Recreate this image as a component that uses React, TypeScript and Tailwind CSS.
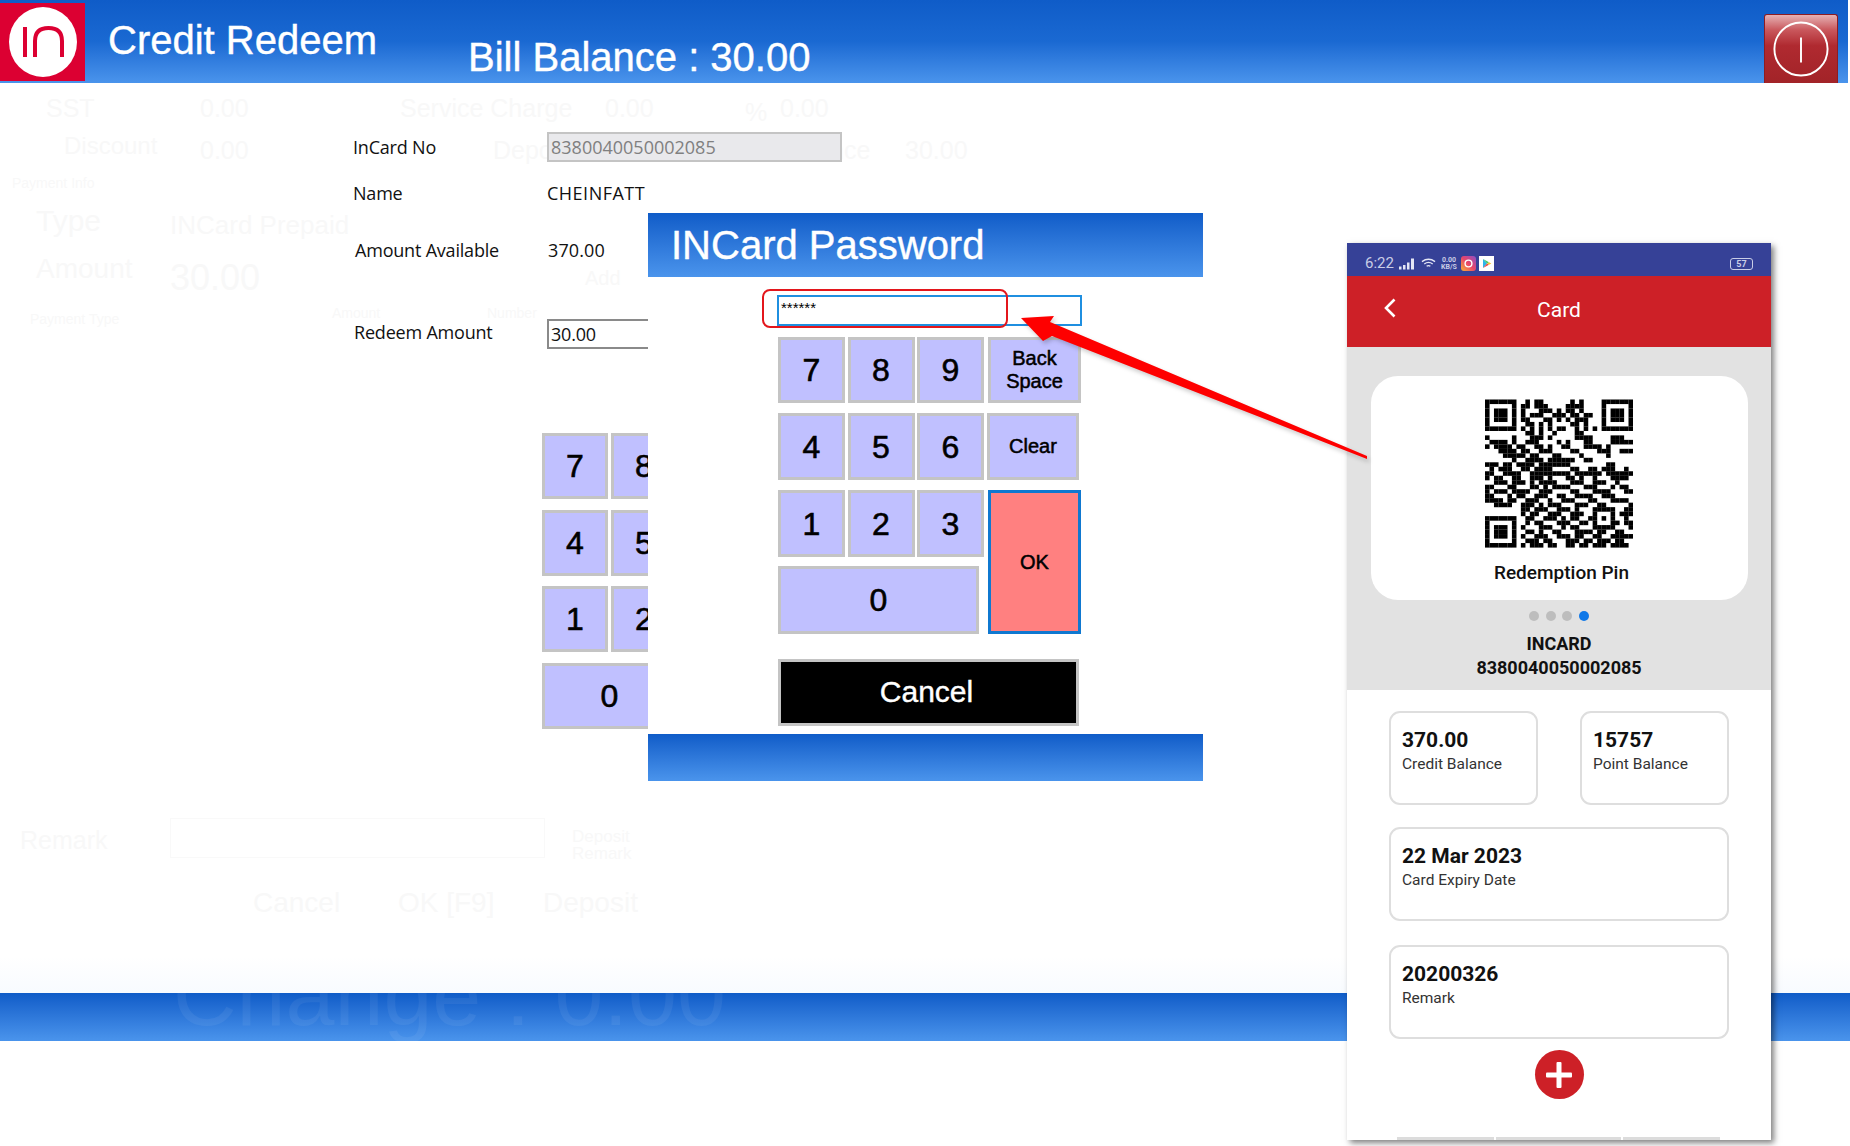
import React from "react";

const F0 = "1111111";
const F1 = "1000001";
const F2 = "1011101";
const qrRows = [
  F0 + "0010110000001010000" + F0,
  F1 + "0110111000011110000" + F1,
  F2 + "0100011101011010000" + F2,
  F2 + "0101110011101101100" + F2,
  F2 + "0110001101010111000" + F2,
  F1 + "0011010100001101000" + F1,
  F0 + "0101010101100101010" + F0,
  "0000000" + "0011010010000110000" + "0000000",
  "100000100011101000001111000011100",
  "011110100111000010100011000011111",
  "101111011001101001100011110100000",
  "000111101100111000011000011100111",
  "000011111011000110000100000100000",
  "000000100111101111110011000000000",
  "111011011110111111100000000110000",
  "010111001101111000011001101110010",
  "110011110011111111101111110111111",
  "101100110011101000110100100011110",
  "001110111010111100011100111001000",
  "110001100011010111100011100010110",
  "101110111100111000011000111100011",
  "110001011001110011001111001110000",
  "111101100111001001110001100011110",
  "001111001110101110001110011000001",
  "000000001101110011101000111110011",
  "000000001011001110011100100010111",
  "111111100110011101011001101010010",
  "100000100101100011100110100011011",
  "101110101000111001011000111110001",
  "101110100110100110001111011001100",
  "101110101001110011101100110011111",
  "100000100111011000111011011101100",
  "111111101011101100110110111011110",
];

function QR() {
  const cells: React.ReactElement[] = [];
  qrRows.forEach((row, y) =>
    row
      .padEnd(33, "0")
      .slice(0, 33)
      .split("")
      .forEach((c, x) => {
        if (c === "1") cells.push(<rect key={`${x}-${y}`} x={x} y={y} width={1.02} height={1.02} />);
      })
  );
  return (
    <svg viewBox="0 0 33 33" className="w-[148px] h-[149px] block" fill="#000">
      {cells}
    </svg>
  );
}

function Key({ children, className = "" }: { children: React.ReactNode; className?: string }) {
  return (
    <div
      className={`flex items-center justify-center bg-[#c0c0ff] border-[3px] border-[#c4c4c4] text-black text-center shrink-0 ${className}`}
    >
      {children}
    </div>
  );
}

const digit = "w-[67px] h-[67px] text-[32px] [-webkit-text-stroke:0.6px_black]";
const word = "text-[20px] leading-[23px] [-webkit-text-stroke:0.5px_black]";

function Dialog() {
  return (
    <div className="absolute left-[648px] top-[213px] w-[555px] h-[568px] bg-white flex flex-col">
      <div className="h-[64px] shrink-0 bg-linear-to-b from-[#0f5cc8] to-[#4a94ec] pl-[23px] flex items-center text-white text-[40px] leading-none [-webkit-text-stroke:0.4px_white]">
        INCard Password
      </div>
      <div className="ml-[129px] mt-[18px] w-[305px] h-[31px] border-2 border-[#1f8fe0] bg-white px-[2px] text-[15px] leading-[22px] text-black">
        ******
      </div>
      <div className="ml-[130px] mt-[11px] flex flex-col gap-[10px]">
        <div className="flex">
          <div className="flex gap-[2.5px]">
            <Key className={`${digit} !h-[66px]`}>7</Key>
            <Key className={`${digit} !h-[66px]`}>8</Key>
            <Key className={`${digit} !h-[66px]`}>9</Key>
          </div>
          <Key className={`ml-[4px] w-[93px] h-[66px] ${word}`}>
            Back
            <br />
            Space
          </Key>
        </div>
        <div className="flex">
          <div className="flex gap-[2.5px]">
            <Key className={digit}>4</Key>
            <Key className={digit}>5</Key>
            <Key className={digit}>6</Key>
          </div>
          <Key className={`ml-[3px] w-[92px] h-[67px] ${word}`}>Clear</Key>
        </div>
        <div className="flex">
          <div className="flex flex-col gap-[9px]">
            <div className="flex gap-[2.5px]">
              <Key className={digit}>1</Key>
              <Key className={digit}>2</Key>
              <Key className={digit}>3</Key>
            </div>
            <Key className="w-[201px] h-[68px] text-[32px] [-webkit-text-stroke:0.6px_black]">0</Key>
          </div>
          <Key className={`ml-[4px] w-[93px] h-[144px] !bg-[#ff8080] !border-[#0f78d0] ${word}`}>OK</Key>
        </div>
      </div>
      <div className="ml-[130px] mt-[25px] w-[301px] h-[67px] bg-black border-[3px] border-[#c4c4c4] pr-[4px] pb-[2px] flex items-center justify-center text-white text-[30px] [-webkit-text-stroke:0.4px_white]">
        Cancel
      </div>
      <div className="mt-auto h-[47px] bg-linear-to-b from-[#0f5cc8] to-[#4a94ec]" />
    </div>
  );
}

function InfoCard({ value, label, className = "" }: { value: string; label: string; className?: string }) {
  return (
    <div className={`h-[94px] rounded-[11px] border-2 border-[#dedede] pl-[11px] pt-[13px] ${className}`}>
      <div className="text-[21px] leading-[28px] font-bold text-[#111]">{value}</div>
      <div className="text-[15.5px] leading-[20px] text-[#333]">{label}</div>
    </div>
  );
}

function Phone() {
  return (
    <div className="absolute left-[1347px] top-[243px] w-[424px] h-[897px] bg-white flex flex-col shadow-[3px_3px_6px_rgba(0,0,0,0.5)] font-['Roboto',sans-serif] overflow-hidden">
      <div className="h-[33px] shrink-0 bg-[#364197] flex items-center pl-[18px] pr-[18px] pt-[8px] text-[#c9cde6]">
        <span className="text-[15px] leading-none">6:22</span>
        <svg viewBox="0 0 18 12" className="w-[18px] h-[13px] ml-[5px]" fill="#e4e6f5">
          <rect x="0" y="9" width="2.5" height="3" />
          <rect x="4" y="7.5" width="2.5" height="4.5" />
          <rect x="8" y="5" width="2.5" height="7" />
          <rect x="12" y="1" width="3" height="11" />
        </svg>
        <svg viewBox="0 0 16 12" className="w-[15px] h-[13px] ml-[4px]" fill="none" stroke="#e4e6f5" strokeWidth="1.4">
          <path d="M1 4 Q8 -1 15 4" />
          <path d="M3.5 6.5 Q8 3 12.5 6.5" />
          <path d="M6 9 Q8 7.5 10 9" />
        </svg>
        <span className="ml-[4px] w-[18px] text-[7px] leading-[7px] text-center font-bold">
          0.00
          <br />
          KB/S
        </span>
        <svg viewBox="0 0 15 15" className="w-[15px] h-[15px] ml-[3px]">
          <defs>
            <linearGradient id="ig" x1="0" y1="1" x2="1" y2="0">
              <stop offset="0" stopColor="#f9b233" />
              <stop offset="0.5" stopColor="#e8456b" />
              <stop offset="1" stopColor="#8a4fc8" />
            </linearGradient>
          </defs>
          <rect width="15" height="15" rx="3" fill="url(#ig)" />
          <circle cx="7.5" cy="7.5" r="3.4" fill="none" stroke="#fff" strokeWidth="1.4" />
        </svg>
        <svg viewBox="0 0 15 15" className="w-[15px] h-[15px] ml-[3px]">
          <rect width="15" height="15" fill="#fff" />
          <path d="M4 3 L8 7.5 L4 12 Z" fill="#2fb4e8" />
          <path d="M4 3 L10 6.3 L8 7.5 Z" fill="#3ec46d" />
          <path d="M4 12 L10 8.7 L8 7.5 Z" fill="#e84a4a" />
          <path d="M10 6.3 L12.3 7.5 L10 8.7 L8 7.5 Z" fill="#f6c22c" />
        </svg>
        <span className="ml-auto w-[23px] h-[12px] rounded-[3px] border border-[#c9cde6] text-[9px] leading-[10px] text-center font-bold">
          57
        </span>
      </div>
      <div className="relative h-[71px] shrink-0 bg-[#cd2027] flex items-center justify-center text-white text-[21px]">
        <svg viewBox="0 0 12 20" className="absolute left-[37px] top-[22px] w-[12px] h-[20px]" fill="none" stroke="#fff" strokeWidth="2.6">
          <path d="M10.5 1.5 L2 10 L10.5 18.5" />
        </svg>
        <span className="-mt-[2px]">Card</span>
      </div>
      <div className="h-[343px] shrink-0 bg-[#e2e2e2] pt-[29px] flex flex-col items-center">
        <div className="w-[377px] h-[224px] bg-white rounded-[27px] flex flex-col items-center pt-[23px]">
          <QR />
          <div className="mt-[13px] ml-[5px] text-[19px] leading-[24px] font-medium text-[#111]">Redemption Pin</div>
        </div>
        <div className="mt-[11px] flex gap-[6.5px]">
          <span className="w-[10px] h-[10px] rounded-full bg-[#bdbdbd]" />
          <span className="w-[10px] h-[10px] rounded-full bg-[#bdbdbd]" />
          <span className="w-[10px] h-[10px] rounded-full bg-[#bdbdbd]" />
          <span className="w-[10px] h-[10px] rounded-full bg-[#0f78e8]" />
        </div>
        <div className="mt-[11px] text-[18px] leading-[23.5px] font-bold text-[#111] text-center">
          INCARD
          <br />
          8380040050002085
        </div>
      </div>
      <div className="flex flex-col px-[42px] pt-[21px]">
        <div className="flex justify-between">
          <InfoCard className="w-[149px]" value="370.00" label="Credit Balance" />
          <InfoCard className="w-[149px]" value="15757" label="Point Balance" />
        </div>
        <InfoCard className="mt-[22px]" value="22 Mar 2023" label="Card Expiry Date" />
        <InfoCard className="mt-[24px]" value="20200326" label="Remark" />
        <div className="mt-[11px] mx-auto w-[49px] h-[49px] rounded-full bg-[#cd2027] flex items-center justify-center">
          <svg viewBox="0 0 26 26" className="w-[26px] h-[26px]" fill="#fff">
            <rect x="10.5" y="0" width="5" height="26" rx="1" />
            <rect x="0" y="10.5" width="26" height="5" rx="1" />
          </svg>
        </div>
      </div>
      <div className="mt-auto flex gap-[2px] pl-[50px] h-[3px]">
        <span className="w-[97px] bg-[#dcdcdc]" />
        <span className="w-[125px] bg-[#dcdcdc]" />
        <span className="w-[97px] bg-[#dcdcdc]" />
      </div>
    </div>
  );
}

function Ghost() {
  const g = "absolute text-[#f8f8f8] whitespace-nowrap leading-none";
  return (
    <div className="absolute inset-0 pointer-events-none">
      <span className={`${g} left-[46px] top-[96px] text-[25px]`}>SST</span>
      <span className={`${g} left-[200px] top-[96px] text-[25px]`}>0.00</span>
      <span className={`${g} left-[400px] top-[96px] text-[25px]`}>Service Charge</span>
      <span className={`${g} left-[605px] top-[96px] text-[25px]`}>0.00</span>
      <span className={`${g} left-[745px] top-[100px] text-[25px]`}>%</span>
      <span className={`${g} left-[780px] top-[96px] text-[25px]`}>0.00</span>
      <span className={`${g} left-[64px] top-[134px] text-[24px]`}>Discount</span>
      <span className={`${g} left-[200px] top-[138px] text-[25px]`}>0.00</span>
      <span className={`${g} left-[493px] top-[138px] text-[25px]`}>Deposit</span>
      <span className={`${g} left-[780px] top-[138px] text-[25px]`}>Balance</span>
      <span className={`${g} left-[905px] top-[138px] text-[25px]`}>30.00</span>
      <span className={`${g} left-[12px] top-[176px] text-[14px]`}>Payment Info</span>
      <span className={`${g} left-[36px] top-[206px] text-[30px]`}>Type</span>
      <span className={`${g} left-[170px] top-[212px] text-[26px]`}>INCard Prepaid</span>
      <span className={`${g} left-[36px] top-[255px] text-[28px]`}>Amount</span>
      <span className={`${g} left-[170px] top-[260px] text-[36px]`}>30.00</span>
      <span className={`${g} left-[585px] top-[268px] text-[20px]`}>Add</span>
      <span className={`${g} left-[30px] top-[312px] text-[14px]`}>Payment Type</span>
      <span className={`${g} left-[332px] top-[306px] text-[14px]`}>Amount</span>
      <span className={`${g} left-[487px] top-[306px] text-[14px]`}>Number</span>
      <span className={`${g} left-[20px] top-[828px] text-[25px]`}>Remark</span>
      <span className={`absolute left-[170px] top-[818px] w-[375px] h-[40px] border border-[#f9f9f9]`} />
      <span className={`${g} left-[572px] top-[828px] text-[17px] leading-[26px] whitespace-pre`}>{"Deposit\nRemark"}</span>
      <span className={`${g} left-[253px] top-[889px] text-[28px]`}>Cancel</span>
      <span className={`${g} left-[398px] top-[889px] text-[28px]`}>OK [F9]</span>
      <span className={`${g} left-[543px] top-[889px] text-[28px]`}>Deposit</span>
    </div>
  );
}

export default function App() {
  const label = "font-['Open_Sans',sans-serif] text-[18px] leading-none text-[#111] tracking-[-0.2px]";
  const leftDigit = "w-[66px] h-[66px] text-[32px] [-webkit-text-stroke:0.6px_black]";
  return (
    <div className="relative w-[1850px] h-[1146px] overflow-hidden bg-white font-['Liberation_Sans',Arial,sans-serif]">
      <Ghost />

      <header className="relative h-[83px] w-[1848px] bg-linear-to-b from-[#0f5cc8] via-[#1a69d2] to-[#4a94ec] flex">
        <div className="mt-[3px] h-[78px] w-[85px] bg-[#dc0032] flex items-center justify-center">
          <svg viewBox="0 0 68 70" className="w-[68px] h-[70px]">
            <ellipse cx="34" cy="35" rx="34" ry="35" fill="#fff" />
            <path d="M16 20 V50" stroke="#dc0032" strokeWidth="4" fill="none" />
            <path d="M26 50 V34 Q26 21 39.5 21 Q53 21 53 34 V50" stroke="#dc0032" strokeWidth="4" fill="none" />
          </svg>
        </div>
        <div className="ml-[23px] mt-[20px] text-white text-[40px] leading-none [-webkit-text-stroke:0.4px_white]">Credit Redeem</div>
        <div className="ml-[91px] mt-[37px] text-white text-[40px] leading-none [-webkit-text-stroke:0.4px_white]">Bill Balance : 30.00</div>
        <div className="relative ml-auto mr-[10px] mt-[14px] w-[74px] h-[69px] bg-[linear-gradient(to_bottom,#e6b2b4_0%,#c9575c_22%,#b02a30_45%,#a22328_100%)] rounded-t-[3px] border-t border-x border-[#8e1c22] flex items-center justify-center">
          <svg viewBox="0 0 60 60" className="w-[58px] h-[58px]" fill="none" stroke="#fff" strokeWidth="2">
            <circle cx="30" cy="30" r="27.5" />
            <path d="M30 18 V44" />
          </svg>
        </div>
      </header>

      <main className="relative h-[910px] pl-[353px] pt-[49px] bg-[linear-gradient(to_bottom,transparent_0%,transparent_96%,#f8fbff_100%)]">
        <div className="flex items-center h-[30px]">
          <span className={`w-[194px] ${label}`}>InCard No</span>
          <div className="w-[295px] h-[30px] bg-[#e9e9ec] border-2 border-[#c4c4c4] px-[2px] flex items-center text-[18px] text-[#808080] font-['Open_Sans',sans-serif]">
            8380040050002085
          </div>
        </div>
        <div className={`mt-[16px] h-[30px] flex items-center ${label}`}>
          <span className="w-[194px]">Name</span>
          <span className="tracking-[0.5px]">CHEINFATT</span>
        </div>
        <div className={`mt-[27px] h-[30px] flex items-center ${label}`}>
          <span className="w-[195px] pl-[2px]">Amount Available</span>
          <span className="tracking-[0.1px]">370.00</span>
        </div>
        <div className="mt-[54px] flex items-center h-[30px]">
          <span className={`w-[194px] ${label} pl-[1px] -mt-[4px]`}>Redeem Amount</span>
          <div className={`w-[295px] h-[30px] border-2 border-[#8a8a8a] bg-white px-[2px] flex items-center ${label}`}>30.00</div>
        </div>
        <div className="ml-[189px] mt-[84px] flex flex-col gap-[10.5px] w-[300px]">
          <div className="flex gap-[3px]">
            <Key className={leftDigit}>7</Key>
            <Key className={leftDigit}>8</Key>
          </div>
          <div className="flex gap-[3px]">
            <Key className={leftDigit}>4</Key>
            <Key className={leftDigit}>5</Key>
          </div>
          <div className="flex gap-[3px]">
            <Key className={leftDigit}>1</Key>
            <Key className={leftDigit}>2</Key>
          </div>
          <Key className="w-[135px] h-[66px] text-[32px] [-webkit-text-stroke:0.6px_black]">0</Key>
        </div>
      </main>

      <footer className="relative h-[48px] bg-linear-to-b from-[#0f5cc8] to-[#4a94ec]">
        <span className="absolute left-[173px] -top-[42px] text-[88px] leading-none text-white/6 whitespace-nowrap">Change : 0.00</span>
      </footer>

      <Dialog />

      <div className="absolute left-[762px] top-[289px] w-[246px] h-[39px] rounded-[8px] border-2 border-[#e3161c]" />

      <Phone />

      <svg className="absolute inset-0 w-[1850px] h-[1146px] pointer-events-none drop-shadow-[2px_3px_2px_rgba(0,0,0,0.2)]" viewBox="0 0 1850 1146">
        <polygon points="1021,318 1054,316 1050,322 1367,456 1367,459 1052,336 1043,341" fill="#fe0000" />
      </svg>
    </div>
  );
}
